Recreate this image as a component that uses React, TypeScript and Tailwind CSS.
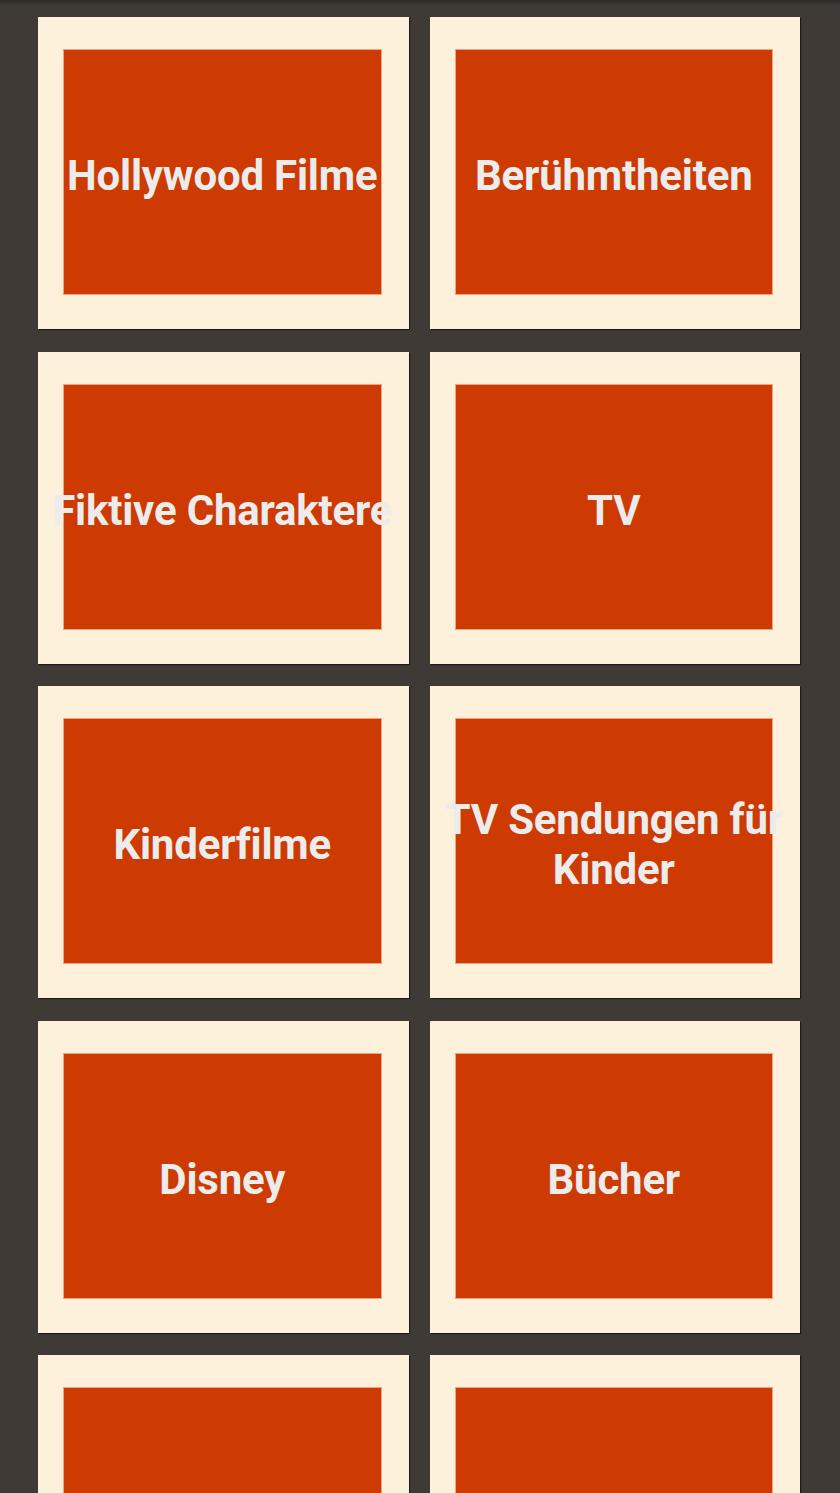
import React from "react";

const items = [
  "Hollywood Filme",
  "Berühmtheiten",
  "Fiktive Charaktere",
  "TV",
  "Kinderfilme",
  "TV Sendungen für Kinder",
  "Disney",
  "Bücher",
  "",
  "",
];

export default function App() {
  return (
    <div className="relative h-[1493px] w-[840px] overflow-hidden bg-[#3f3a36]" style={{ fontFamily: "Roboto, 'Noto Sans', sans-serif" }}>
      <div className="pointer-events-none absolute left-0 top-0 z-10 h-[6px] w-full bg-gradient-to-b from-black/30 to-transparent" />
      <div className="grid grid-cols-2 gap-x-[21px] gap-y-[22.5px] pl-[38px] pr-[40px] pt-[17px]">
        {items.map((t, i) => (
          <div
            key={i}
            className="h-[312px] bg-[#fef1dc] pt-[33px] pb-[35px] pl-[26px] pr-[28px] shadow-[1px_1px_1px_rgba(0,0,0,0.55)]"
          >
            <div className="flex h-full w-full items-center justify-center bg-[#cd3a02] shadow-[0_0_0_1px_rgba(230,110,70,0.6)]">
              <div className="w-[360px] shrink-0 pt-[8px] text-center text-[42px] font-bold leading-[50px] tracking-[-0.2px] text-[#ececec]">
                {t}
              </div>
            </div>
          </div>
        ))}
      </div>
    </div>
  );
}
